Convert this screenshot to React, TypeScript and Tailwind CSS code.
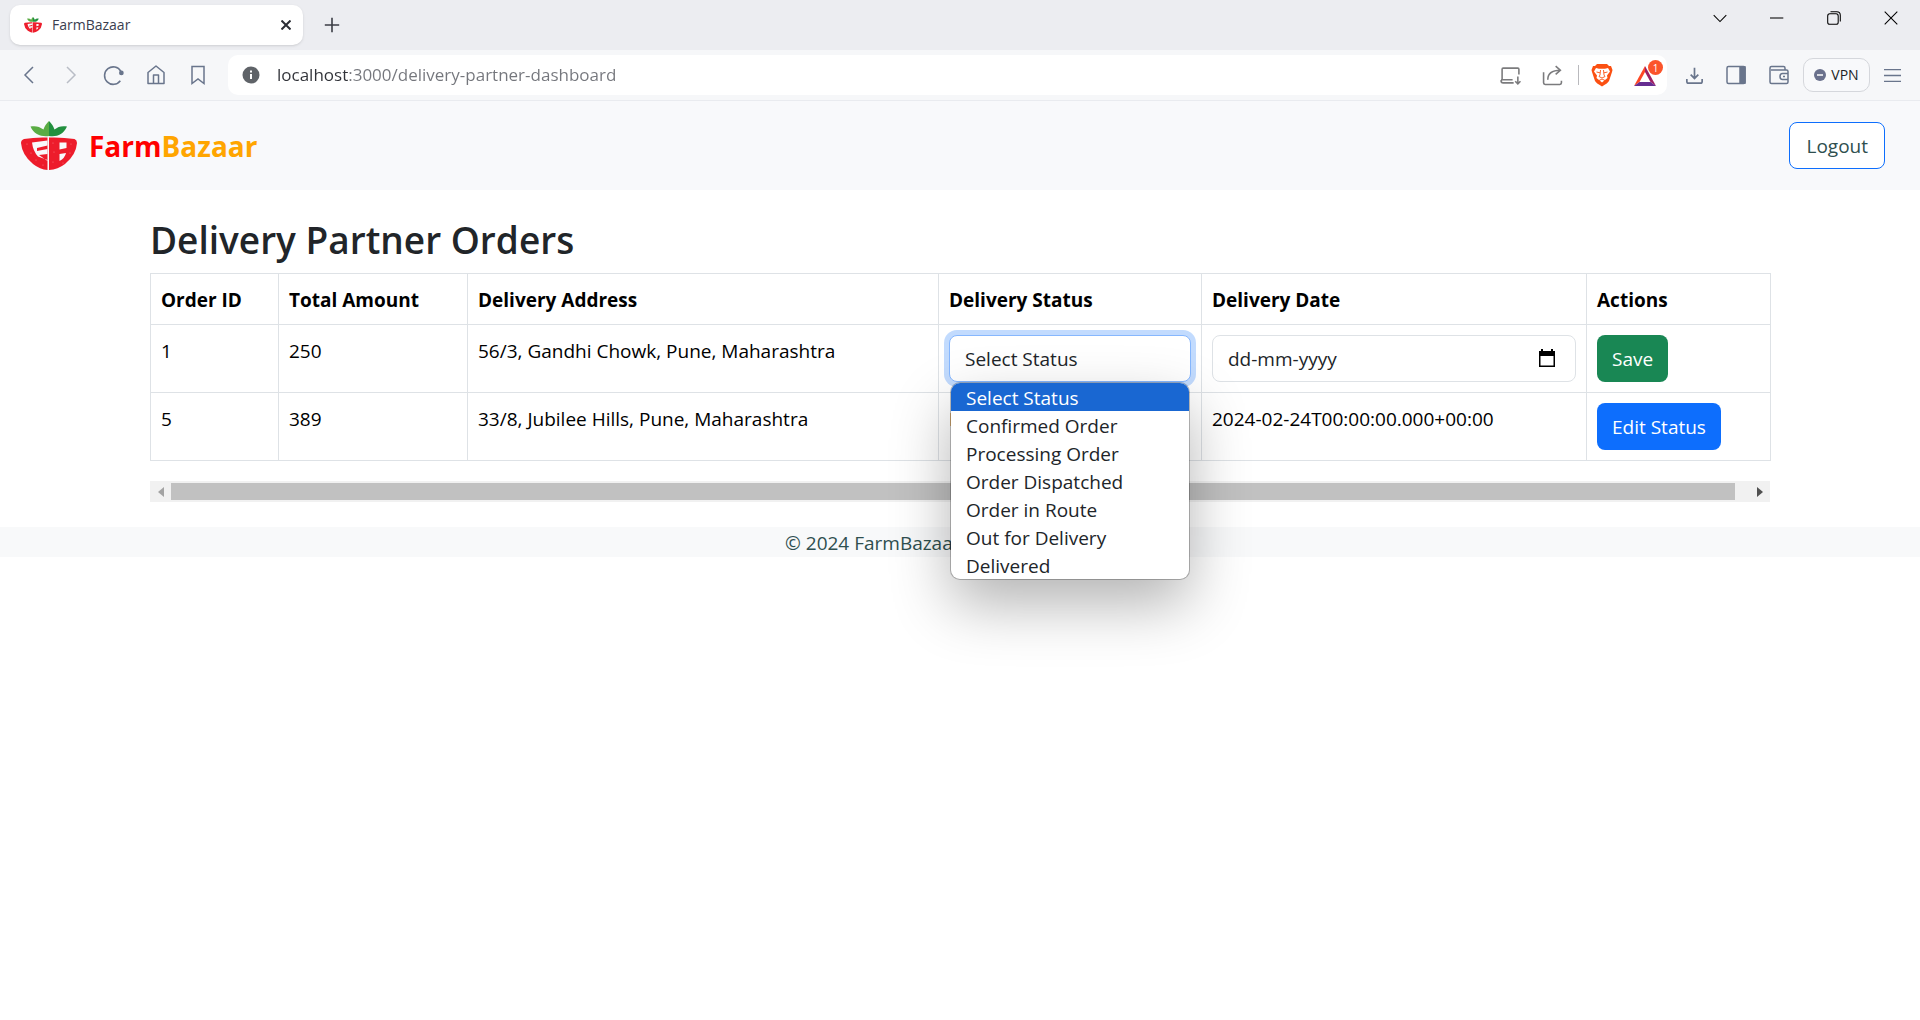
import { useState } from "react";
import type { ReactNode } from "react";

const STATUSES = [
  "Select Status",
  "Confirmed Order",
  "Processing Order",
  "Order Dispatched",
  "Order in Route",
  "Out for Delivery",
  "Delivered",
];

function StrawberryLogo({ className }: { className: string }) {
  return (
    <svg viewBox="0 0 56 50" className={className} aria-hidden="true">
      <path d="M9.500 5.500c5-1 9 0 13 3 1-3 2-5 5.500-8.500v15c-7 1-15-1-18.500-9.500z" fill="#5aac44" />
      <path d="M46 5.500c-5-1-9 0-12.500 3-1-3-2-5-5.500-8.500v15c8 1 14-1 18-9.500z" fill="#22903f" />
      <path d="M3 18q11-2 23.500-1.500V49Q19 48.500 12 43 1 34 0 22 0 19 3 18z" fill="#ed1c2b" />
      <path d="M28 16.500q13-.5 25.500 1.500 2.500 1 2.500 4Q55 34 44 43 37 48.500 28 49z" fill="#ed1c2b" />
      <path d="M11 21.500l15.500-2v5L16 27v3l10.500-2v5L18 34l8.500 6v-1L17 35.500Q12 30 11 21.500z" fill="#f8f9fb" />
      <path d="M38.500 21.500h7v5.500l-7 1.500zM38.500 33l6.500-1q-1 5-6.500 8z" fill="#f8f9fb" />
      <g fill="#f8767d">
        <circle cx="6" cy="23" r=".6" /><circle cx="10" cy="32" r=".6" /><circle cx="15" cy="39" r=".6" />
        <circle cx="22" cy="44" r=".6" /><circle cx="32" cy="22" r=".6" /><circle cx="33" cy="31" r=".6" />
        <circle cx="32" cy="41" r=".6" /><circle cx="50" cy="23" r=".6" /><circle cx="49" cy="32" r=".6" />
        <circle cx="42" cy="42" r=".6" />
      </g>
    </svg>
  );
}

function Icon({ children, className = "size-5 text-[#69758c]" }: { children: ReactNode; className?: string }) {
  return (
    <svg viewBox="0 0 20 20" fill="none" stroke="currentColor" strokeWidth="1.500" className={className} aria-hidden="true">
      {children}
    </svg>
  );
}

function IconButton({ label, className = "size-5", children }: { label: string; className?: string; children: ReactNode }) {
  return (
    <button type="button" aria-label={label} className={`flex shrink-0 items-center justify-center ${className}`}>
      {children}
    </button>
  );
}

function TabStrip() {
  return (
    <div className="flex h-[50px] items-start justify-between bg-[#ecedf1] pl-[10px]">
      <div className="flex items-center gap-[21px] pt-[5px]">
        <div className="flex h-10 w-[293px] items-center rounded-[10px] bg-white pr-3 pl-[14px] shadow-sm">
          <StrawberryLogo className="h-[18px] w-[18px]" />
          <span className="ml-[10px] flex-1 text-[14px] text-[#3b3e4f]">FarmBazaar</span>
          <IconButton label="Close tab" className="size-[10px]">
            <Icon className="size-[10px] text-[#2b2d35]"><path d="M1 1l18 18M19 1L1 19" strokeWidth="4" /></Icon>
          </IconButton>
        </div>
        <IconButton label="New tab" className="size-4">
          <Icon className="size-4 text-[#3b3d45]"><path d="M10 1v18M1 10h18" strokeWidth="2" /></Icon>
        </IconButton>
      </div>
      <div className="flex items-center gap-[43px] pt-[11px] pr-[22px] text-black">
        <IconButton label="Search tabs" className="size-[14px]">
          <Icon className="size-[14px]"><path d="M1 6l9 9 9-9" /></Icon>
        </IconButton>
        <IconButton label="Minimize" className="size-[14px]">
          <Icon className="size-[14px]"><path d="M0 10h19" /></Icon>
        </IconButton>
        <IconButton label="Restore" className="size-[14px]">
          <Icon className="size-[14px]"><rect x="1" y="4" width="15" height="15" rx="3" /><path d="M5 1h9q5 0 5 5v9" /></Icon>
        </IconButton>
        <IconButton label="Close window" className="size-[14px]">
          <Icon className="size-[14px]"><path d="M1 1l18 18M19 1L1 19" /></Icon>
        </IconButton>
      </div>
    </div>
  );
}

function Toolbar() {
  return (
    <div className="flex h-[51px] items-center border-b border-[#e9ebef] bg-[#f6f7f9] pr-[19px] pl-[19px]">
      <div className="flex items-center gap-[22px]">
        <IconButton label="Back"><Icon><path d="M14 2L6 10l8 8" /></Icon></IconButton>
        <IconButton label="Forward"><Icon className="size-5 text-[#b9bdc6]"><path d="M6 2l8 8-8 8" /></Icon></IconButton>
        <IconButton label="Reload" className="size-[21px]">
          <Icon className="size-[21px] text-[#69758c]">
            <path d="M16.500 15A8.300 8.300 0 1 1 17 6" />
            <circle cx="17.500" cy="7.500" r="1.500" fill="currentColor" />
          </Icon>
        </IconButton>
        <IconButton label="Home">
          <Icon><path d="M2 7.500L10 1l8 6.500V18.500H2zM7.500 18V10h5v8" strokeLinejoin="round" /></Icon>
        </IconButton>
        <IconButton label="Bookmark this page">
          <Icon><path d="M4 1.500h12v17l-6-4.500-6 4.500z" /></Icon>
        </IconButton>
      </div>
      <div className="ml-5 flex h-10 flex-1 items-center rounded-[10px] bg-white pr-1 pl-[14px]">
        <svg viewBox="0 0 18 18" className="size-[18px]" aria-hidden="true">
          <circle cx="9" cy="9" r="8.500" fill="#5f6368" />
          <path d="M9 8v5M9 4.500v2" stroke="#fff" strokeWidth="2" />
        </svg>
        <input
          type="text"
          readOnly
          aria-label="Address"
          value="localhost:3000/delivery-partner-dashboard"
          className="ml-[17px] flex-1 bg-[linear-gradient(90deg,#303238_72px,#74767c_72px)] bg-clip-text text-[17px] leading-6 text-transparent outline-none"
        />
        <div className="flex items-center">
          <IconButton label="Install app" className="size-[21px]">
            <Icon className="size-[21px] text-[#7b7b7d]">
              <path d="M13 17H3q-2 0-2-2l1-1V4q0-1 1-1h14q1 0 1 1v5M1 14h11M17 11v7M14.500 15.500L17 18l2.500-2.500" />
            </Icon>
          </IconButton>
          <IconButton label="Share" className="ml-[21px] size-[21px]">
            <Icon className="size-[21px] text-[#7b7b7d]">
              <path d="M1.500 7v10q0 1.500 1.500 1.500h14q1.500 0 1.500-1.500v-2M5.500 14q0-9 12-9M13 1l4.500 4-4.500 4" />
            </Icon>
          </IconButton>
          <span className="ml-[15px] h-5 w-px bg-[#b9b9bd]" />
          <IconButton label="Brave Shields" className="ml-3 h-6 w-[22px]">
            <svg viewBox="0 0 22 24" className="h-6 w-[22px]" aria-hidden="true">
              <path d="M6 1h10l2 2h2l1.500 4-.5 2-3 9q-1 2-7 5.500Q5 20 4 18L1 9 .5 7 2 3h2z" fill="#fb5012" />
              <path d="M5 5l3 .8h6l3-.8 2 3.500-3 4 .5 2.500-2.500 2-3 2.500-3-2.500-2.500-2 .5-2.500-3-4z" fill="#fff" />
              <path d="M5.500 9l3.500.8M16.500 9l-3.500.8M9.500 7l-.5 5-1 1.500 3 1.500 3-1.500-1-1.500-.5-5M8 17.500l3-1.500 3 1.500" fill="none" stroke="#fb5012" strokeWidth=".9" />
            </svg>
          </IconButton>
          <IconButton label="Brave Rewards" className="relative ml-5 h-6 w-[30px]">
            <svg viewBox="0 0 30 26" className="h-[26px] w-[30px]" aria-hidden="true">
              <path d="M12 4v6L6.500 20 1 24z" fill="#ff4724" />
              <path d="M12 4v6L17.500 20 23 24z" fill="#9e1f63" />
              <path d="M1 24l5.500-4h11L23 24z" fill="#662d91" />
            </svg>
            <span className="absolute -top-[3px] right-0 flex size-[15px] items-center justify-center rounded-full bg-[#fb542b] text-[10px] text-white">1</span>
          </IconButton>
        </div>
      </div>
      <div className="ml-[19px] flex items-center gap-[23px]">
        <IconButton label="Downloads" className="size-[17px]">
          <Icon className="size-[17px] text-[#69758c]">
            <path d="M10 1v12M5.500 9l4.500 4.500L14.500 9M1 14v3q0 2 2 2h14q2 0 2-2v-3" strokeWidth="2" />
          </Icon>
        </IconButton>
        <IconButton label="Sidebar">
          <Icon><rect x="1" y="1.500" width="18" height="17" rx="1.500" /><path d="M14 2h5v16h-5z" fill="currentColor" /></Icon>
        </IconButton>
        <IconButton label="Wallet">
          <Icon>
            <path d="M16 5V3q0-1.500-1.500-1.500h-12Q1 1.500 1 3v14q0 1.500 1.500 1.500h15q1.500 0 1.500-1.500V6.500q0-1.500-1.500-1.500H2M19 8.500h-5.500Q11 8.500 11 11.500t2.500 3H19M14 11.500h2" />
          </Icon>
        </IconButton>
      </div>
      <button type="button" className="ml-[14px] flex h-[34px] w-[67px] items-center justify-center gap-[5px] rounded-[10px] border border-[#d5d7dc] bg-[#f8f9fb] text-[14px] text-[#1d1f25]">
        <svg viewBox="0 0 12 12" className="size-3" aria-hidden="true">
          <circle cx="6" cy="6" r="6" fill="#69708c" />
          <path d="M3 6h6" stroke="#fff" strokeWidth="1.500" />
        </svg>
        VPN
      </button>
      <IconButton label="Menu" className="ml-[14px] size-[17px]">
        <Icon className="size-[17px] text-[#69758c]"><path d="M0 3h20M0 10h20M0 17h20" /></Icon>
      </IconButton>
    </div>
  );
}

function SiteHeader() {
  return (
    <nav className="flex h-[89px] items-center justify-between bg-[#f8f9fb] pr-[35px] pl-[21px]">
      <a href="/" className="flex items-center gap-3">
        <StrawberryLogo className="h-[50px] w-14" />
        <span className="text-[28px] leading-10 font-bold text-[#ffa500] [font-family:'Comic_Sans_MS','Open_Sans',sans-serif]">
          <span className="text-[#ff0000]">Farm</span>Bazaar
        </span>
      </a>
      <button type="button" className="h-[47px] rounded-lg border border-[#0d6efd] bg-white px-4 text-[#2f4f4f]">
        Logout
      </button>
    </nav>
  );
}

function StatusPicker() {
  const [status, setStatus] = useState(STATUSES[0]);
  return (
    <div className="relative">
      <select
        aria-label="Delivery status"
        value={status}
        onChange={(e) => setStatus(e.target.value)}
        className="block h-[47px] w-full appearance-none rounded-lg border border-[#86b7fe] bg-white px-[15px] text-[#212529] ring-[5px] ring-[#c2dbfe] outline-none"
      >
        {STATUSES.map((s) => <option key={s}>{s}</option>)}
      </select>
      <ul
        role="listbox"
        aria-label="Delivery status options"
        className="absolute inset-x-[2px] top-full z-10 mt-px overflow-hidden rounded-[9px] bg-white text-[#212529] shadow-[0_0_0_1px_rgba(0,0,0,0.25),0_25px_60px_rgba(0,0,0,0.3)]"
      >
        {STATUSES.map((s) => (
          <li
            key={s}
            role="option"
            aria-selected={s === status}
            onClick={() => setStatus(s)}
            className="h-7 px-[15px] leading-[30px] aria-selected:bg-[#1967d2] aria-selected:text-white"
          >
            {s}
          </li>
        ))}
      </ul>
    </div>
  );
}

function DateField() {
  return (
    <div className="flex h-[47px] items-center rounded-lg border border-[#dee2e6] bg-white pr-[18px] pl-[15px]">
      <input type="text" aria-label="Delivery date" placeholder="dd-mm-yyyy" className="w-full min-w-0 flex-1 text-[#212529] outline-none placeholder:text-[#212529]" />
      <IconButton label="Open calendar">
        <svg viewBox="0 0 20 20" className="size-5" aria-hidden="true">
          <path d="M4 0h2v2h8V0h2v2h2v16H2V2h2zM3.500 7v9.500h13V7z" fill="#000" fillRule="evenodd" />
        </svg>
      </IconButton>
    </div>
  );
}

const textCell = "border border-[#dee2e6] px-[10px] pt-[11px] pb-[9px] text-left align-top";
const controlCell = "border border-[#dee2e6] p-[10px] text-left align-top";

function OrdersTable() {
  return (
    <table className="mb-5 w-full table-fixed border-collapse text-black">
      <colgroup>
        <col className="w-[128px]" />
        <col className="w-[189px]" />
        <col className="w-[471px]" />
        <col className="w-[263px]" />
        <col className="w-[385px]" />
        <col className="w-[184px]" />
      </colgroup>
      <thead>
        <tr>
          {["Order ID", "Total Amount", "Delivery Address", "Delivery Status", "Delivery Date", "Actions"].map((h) => (
            <th key={h} scope="col" className={`${textCell} font-bold`}>{h}</th>
          ))}
        </tr>
      </thead>
      <tbody>
        <tr>
          <td className={textCell}>1</td>
          <td className={textCell}>250</td>
          <td className={textCell}>56/3, Gandhi Chowk, Pune, Maharashtra</td>
          <td className={controlCell}><StatusPicker /></td>
          <td className={controlCell}><DateField /></td>
          <td className={controlCell}>
            <button type="button" className="block h-[47px] rounded-lg bg-[#198754] px-[15px] text-white">Save</button>
          </td>
        </tr>
        <tr>
          <td className={textCell}>5</td>
          <td className={textCell}>389</td>
          <td className={textCell}>33/8, Jubilee Hills, Pune, Maharashtra</td>
          <td className={textCell}>Processing Order</td>
          <td className={textCell}>2024-02-24T00:00:00.000+00:00</td>
          <td className={controlCell}>
            <button type="button" className="block h-[47px] rounded-lg bg-[#0d6efd] px-[15px] text-white">Edit Status</button>
          </td>
        </tr>
      </tbody>
    </table>
  );
}

function HorizontalScrollbar() {
  return (
    <div className="flex h-[21px] items-center bg-[#f1f1f1]">
      <IconButton label="Scroll left" className="size-[21px]">
        <svg viewBox="0 0 6 10" className="h-[10px] w-[6px]" aria-hidden="true"><path d="M6 0v10L0 5z" fill="#a3a3a3" /></svg>
      </IconButton>
      <div className="h-[17px] flex-1 pr-[14px]">
        <div className="h-full bg-[#c1c1c1]" />
      </div>
      <IconButton label="Scroll right" className="size-[21px]">
        <svg viewBox="0 0 6 10" className="h-[10px] w-[6px]" aria-hidden="true"><path d="M0 0v10l6-5z" fill="#505050" /></svg>
      </IconButton>
    </div>
  );
}

export default function App() {
  return (
    <div className="min-h-screen bg-white text-[19px] leading-[30px] [font-family:'Segoe_UI','Open_Sans',sans-serif]">
      <header>
        <TabStrip />
        <Toolbar />
      </header>
      <SiteHeader />
      <main className="mx-auto max-w-[1650px] px-[15px] pt-[26px] pb-[25px]">
        <h1 className="mb-[9px] text-[37px] leading-[48px] font-semibold text-[#212529]">Delivery Partner Orders</h1>
        <OrdersTable />
        <HorizontalScrollbar />
      </main>
      <footer className="bg-[#f8f9fa] pt-[2px] text-center leading-7 text-[#2f4f4f]">© 2024 FarmBazaar. All rights reserved.</footer>
    </div>
  );
}
